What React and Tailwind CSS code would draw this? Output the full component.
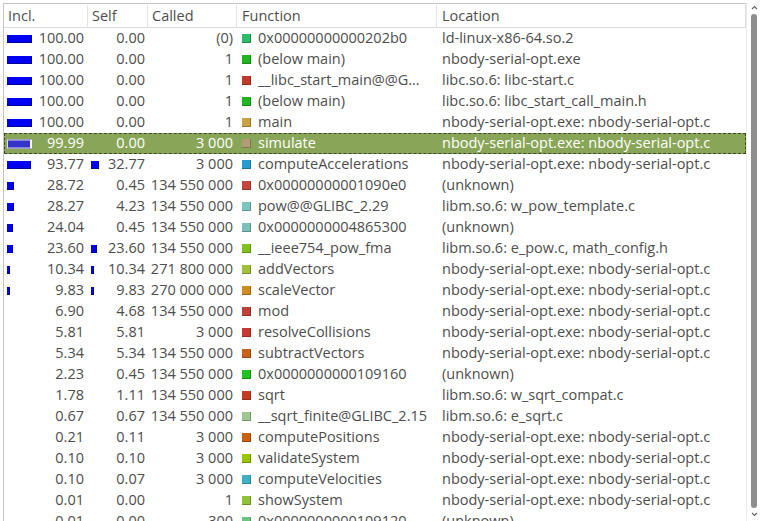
const rows = [
  { incl: "100.00", self: "0.00", called: "(0)", color: "#2dbb6c", fn: "0x00000000000202b0", loc: "ld-linux-x86-64.so.2", ib: 100 },
  { incl: "100.00", self: "0.00", called: "1", color: "#22b522", fn: "(below main)", loc: "nbody-serial-opt.exe", ib: 100 },
  { incl: "100.00", self: "0.00", called: "1", color: "#c23a2a", fn: "__libc_start_main@@G…", loc: "libc.so.6: libc-start.c", ib: 100 },
  { incl: "100.00", self: "0.00", called: "1", color: "#22b522", fn: "(below main)", loc: "libc.so.6: libc_start_call_main.h", ib: 100 },
  { incl: "100.00", self: "0.00", called: "1", color: "#c9a245", fn: "main", loc: "nbody-serial-opt.exe: nbody-serial-opt.c", ib: 100 },
  { incl: "99.99", self: "0.00", called: "3 000", color: "#b39b78", fn: "simulate", loc: "nbody-serial-opt.exe: nbody-serial-opt.c", ib: 100, sel: true },
  { incl: "93.77", self: "32.77", called: "3 000", color: "#2a9bd0", fn: "computeAccelerations", loc: "nbody-serial-opt.exe: nbody-serial-opt.c", ib: 94, sb: 33 },
  { incl: "28.72", self: "0.45", called: "134 550 000", color: "#c4443e", fn: "0x00000000001090e0", loc: "(unknown)", ib: 29 },
  { incl: "28.27", self: "4.23", called: "134 550 000", color: "#7cc6be", fn: "pow@@GLIBC_2.29", loc: "libm.so.6: w_pow_template.c", ib: 28 },
  { incl: "24.04", self: "0.45", called: "134 550 000", color: "#7cc0b8", fn: "0x0000000004865300", loc: "(unknown)", ib: 24 },
  { incl: "23.60", self: "23.60", called: "134 550 000", color: "#80c21e", fn: "__ieee754_pow_fma", loc: "libm.so.6: e_pow.c, math_config.h", ib: 24, sb: 24 },
  { incl: "10.34", self: "10.34", called: "271 800 000", color: "#a3c03c", fn: "addVectors", loc: "nbody-serial-opt.exe: nbody-serial-opt.c", ib: 10, sb: 10 },
  { incl: "9.83", self: "9.83", called: "270 000 000", color: "#d08b22", fn: "scaleVector", loc: "nbody-serial-opt.exe: nbody-serial-opt.c", ib: 10, sb: 10 },
  { incl: "6.90", self: "4.68", called: "134 550 000", color: "#c2403a", fn: "mod", loc: "nbody-serial-opt.exe: nbody-serial-opt.c" },
  { incl: "5.81", self: "5.81", called: "3 000", color: "#c63a34", fn: "resolveCollisions", loc: "nbody-serial-opt.exe: nbody-serial-opt.c" },
  { incl: "5.34", self: "5.34", called: "134 550 000", color: "#c6621a", fn: "subtractVectors", loc: "nbody-serial-opt.exe: nbody-serial-opt.c" },
  { incl: "2.23", self: "0.45", called: "134 550 000", color: "#22c022", fn: "0x0000000000109160", loc: "(unknown)" },
  { incl: "1.78", self: "1.11", called: "134 550 000", color: "#c23c24", fn: "sqrt", loc: "libm.so.6: w_sqrt_compat.c" },
  { incl: "0.67", self: "0.67", called: "134 550 000", color: "#a2c690", fn: "__sqrt_finite@GLIBC_2.15", loc: "libm.so.6: e_sqrt.c" },
  { incl: "0.21", self: "0.11", called: "3 000", color: "#c8620e", fn: "computePositions", loc: "nbody-serial-opt.exe: nbody-serial-opt.c" },
  { incl: "0.10", self: "0.10", called: "3 000", color: "#98c400", fn: "validateSystem", loc: "nbody-serial-opt.exe: nbody-serial-opt.c" },
  { incl: "0.10", self: "0.07", called: "3 000", color: "#40b0c4", fn: "computeVelocities", loc: "nbody-serial-opt.exe: nbody-serial-opt.c" },
  { incl: "0.01", self: "0.00", called: "1", color: "#92c23a", fn: "showSystem", loc: "nbody-serial-opt.exe: nbody-serial-opt.c" },
  { incl: "0.01", self: "0.00", called: "300", color: "#6cc482", fn: "0x0000000000109120", loc: "(unknown)" },
];

const cols = "grid grid-cols-[84px_60px_89px_200px_1fr]";

const Bar = ({ pct, sel }) => {
  if (!pct) return null;
  const w = Math.max(2, Math.round(pct * 0.25));
  return (
    <span
      className={
        sel
          ? "absolute left-[3px] top-1/2 -translate-y-1/2 h-[9px] bg-[#3434c8] border border-[#d8dcf0] border-r-2 border-r-white"
          : "absolute left-[3px] top-1/2 -translate-y-1/2 h-[8px] bg-[#0000f4] border-r border-b border-[#00009a]"
      }
      style={{ width: w }}
    />
  );
};

const Row = ({ r }) => (
  <div
    className={
      cols +
      " h-[21px] items-center leading-none " +
      (r.sel
        ? "bg-[#89a558] text-white outline outline-1 outline-dashed outline-[#3c4a28] -outline-offset-1"
        : "text-[#4e4e4e]")
    }
  >
    <div className="relative h-full flex items-center justify-end pr-[4px]">
      <Bar pct={r.ib} sel={r.sel} />
      {r.incl}
    </div>
    <div className="relative h-full flex items-center justify-end pr-[3px]">
      <Bar pct={r.sb} />
      {r.self}
    </div>
    <div className="h-full flex items-center justify-end pr-[4px] whitespace-nowrap">{r.called}</div>
    <div className="h-full flex items-center pl-[5px] gap-[7px] whitespace-nowrap overflow-hidden">
      <span
        className="w-[9px] h-[9px] shrink-0 border-b border-r border-black/25"
        style={{ backgroundColor: r.color }}
      />
      {r.fn}
    </div>
    <div className="h-full flex items-center pl-[5px] whitespace-nowrap overflow-hidden">{r.loc}</div>
  </div>
);

export default function App() {
  return (
    <div
      className="w-[761px] h-[521px] bg-white overflow-hidden flex text-[14.5px]"
      style={{ fontFamily: '"Open Sans", "Noto Sans", sans-serif' }}
    >
      <div className="flex-1 pl-[3px] pt-[3px] overflow-hidden">
        <div className="h-full border-l border-t border-[#c4c4c4] border-r border-r-[#ececec] overflow-hidden">
          <div className={cols + " h-[24px] border-b border-[#dcdcdc] text-[#4e4e4e] bg-white"}>
            <div className="flex items-center pl-[4px] border-r border-[#e4e4e4] my-[1px]">Incl.</div>
            <div className="flex items-center pl-[4px] border-r border-[#e4e4e4] my-[1px]">Self</div>
            <div className="flex items-center pl-[4px] border-r border-[#e4e4e4] my-[1px]">Called</div>
            <div className="flex items-center pl-[5px] border-r border-[#e4e4e4] my-[1px]">Function</div>
            <div className="flex items-center pl-[5px] border-r border-[#dcdcdc] my-[1px]">Location</div>
          </div>
          {rows.map((r, i) => (
            <Row key={i} r={r} />
          ))}
        </div>
      </div>
      <div className="w-[14px] flex flex-col items-center pt-[5px] pb-[4px]">
        <svg width="7" height="5" viewBox="0 0 7 5" className="mb-[4px]">
          <path d="M1 4 L3.5 1.5 L6 4" fill="none" stroke="#666" strokeWidth="1.2" />
        </svg>
        <div className="flex-1 w-[6px] rounded-full bg-[#8d8d8d] mr-[1px]" />
        <svg width="7" height="5" viewBox="0 0 7 5" className="mt-[4px]">
          <path d="M1 1 L3.5 3.5 L6 1" fill="none" stroke="#666" strokeWidth="1.2" />
        </svg>
      </div>
    </div>
  );
}
